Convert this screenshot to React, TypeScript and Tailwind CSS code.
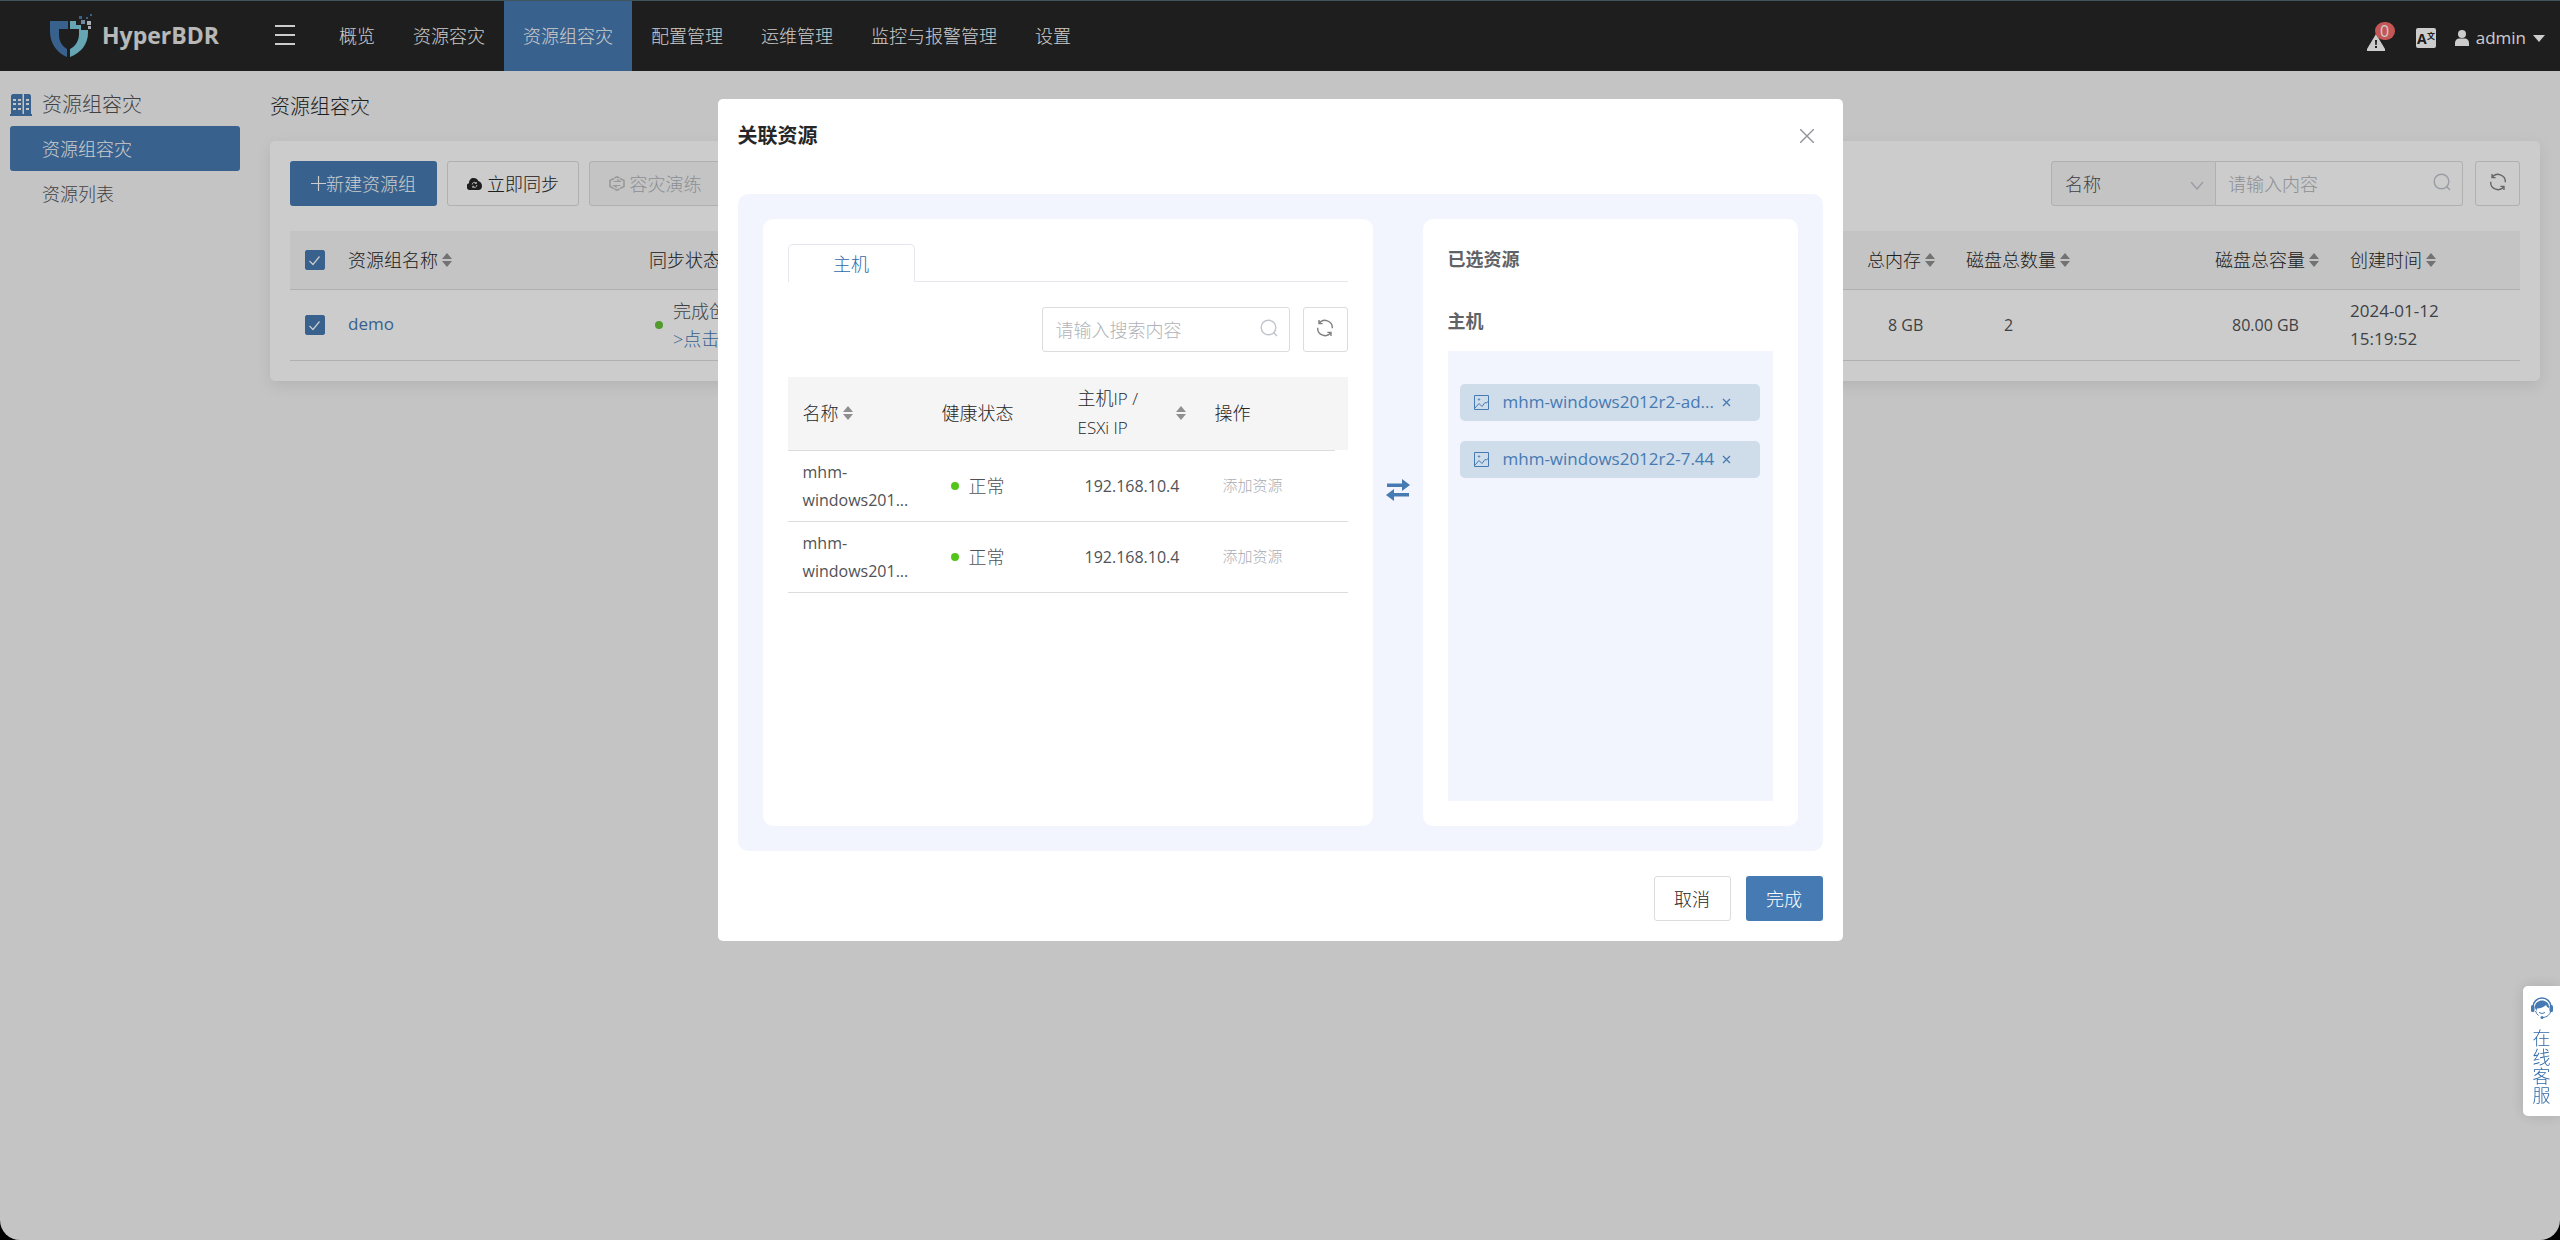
import { useState } from "react";
import clsx from "clsx";

const navItems = ["概览", "资源容灾", "资源组容灾", "配置管理", "运维管理", "监控与报警管理", "设置"];

const hosts = [
  { id: 1, name: "mhm-", rest: "windows201...", status: "正常", ip: "192.168.10.4" },
  { id: 2, name: "mhm-", rest: "windows201...", status: "正常", ip: "192.168.10.4" },
];

const Logo = () => (
  <svg width="44" height="44" viewBox="0 0 44 44" aria-hidden="true">
    <path d="M1 7H19V15H10V21C10 27 13 32 18 35V43C8 39 1 29 1 18Z" fill="#467ab2" />
    <path d="M21 7H27V11H32V16H39V19C39 30 32 39 21 43V35C27 32 30 26 30 20V15H21Z" fill="#7fcfe2" />
    <path d="M30 2h3v3h-3zM37 3h2v2h-2zM41 0h2v2h-2z" fill="#467ab2" />
    <path d="M32 6h4v4h-4z" fill="#8fa9c8" />
    <path d="M38 7h4v4h-4zM39 12h3v3h-3z" fill="#d5dbe0" />
  </svg>
);

const SortIcon = () => (
  <svg width="10" height="14" viewBox="0 0 10 14" className="shrink-0" aria-hidden="true">
    <path d="M5 0L10 6H0ZM5 14L0 8H10Z" fill="#8f8f8f" />
  </svg>
);

const SearchIcon = () => (
  <svg width="18" height="18" viewBox="0 0 18 18" fill="none" stroke="#c0c4cc" strokeWidth="1.4" aria-hidden="true">
    <circle cx="8.5" cy="8.5" r="7.3" />
    <path d="M13.5 13.5L17 17" />
  </svg>
);

const RefreshIcon = () => (
  <svg width="18" height="18" viewBox="0 0 18 18" fill="none" stroke="#808080" strokeWidth="1.4" aria-hidden="true">
    <path d="M3 1V4.6H6.6M3 4.6A7.3 7.3 0 0 1 16.3 9.2" />
    <path d="M15 17V13.4H11.4M15 13.4A7.3 7.3 0 0 1 1.7 8.8" />
  </svg>
);

const RefreshButton = () => (
  <button
    type="button"
    aria-label="刷新"
    className="flex size-[45px] items-center justify-center rounded-[3px] border border-[#dcdcdc] bg-white pb-1"
  >
    <RefreshIcon />
  </button>
);

const Th = ({ children, sortable, className }: { children?: React.ReactNode; sortable?: boolean; className?: string }) => (
  <th scope="col" className={clsx("border-b border-[#dcdcdc] px-[15px] text-left font-light", className)}>
    <span className="flex items-center gap-1">
      {children}
      {sortable && <SortIcon />}
    </span>
  </th>
);

const Checkbox = ({ label }: { label: string }) => (
  <span className="relative ml-[15px] block size-5">
    <input
      type="checkbox"
      defaultChecked
      aria-label={label}
      className="peer block size-5 appearance-none rounded-[2px] border border-[#467ab2] checked:bg-[#467ab2]"
    />
    <svg viewBox="0 0 20 20" className="pointer-events-none absolute inset-0 hidden peer-checked:block" aria-hidden="true">
      <path d="M4.500 11L8 14.500L14.500 6.500" fill="none" stroke="#fff" strokeWidth="1.2" />
    </svg>
  </span>
);

const Header = () => (
  <header className="flex h-[71px] items-center border-t border-[#4f6a72] bg-[#262626] text-white">
    <a href="#home" className="ml-[49px] flex w-[226px] items-center gap-[9px]">
      <Logo />
      <span className="text-[23px] font-bold text-[#e6e6e6]">HyperBDR</span>
    </a>
    <button type="button" aria-label="菜单" className="flex w-[45px] flex-col gap-[7px] pb-[2px]">
      <span className="h-[2px] w-5 bg-white" />
      <span className="h-[2px] w-5 bg-white" />
      <span className="h-[2px] w-5 bg-white" />
    </button>
    <nav className="flex h-full">
      {navItems.map((item) => (
        <a
          key={item}
          href="#nav"
          className={clsx("flex h-full items-center whitespace-nowrap px-[19px]", item === "资源组容灾" && "bg-[#467ab2]")}
        >
          {item}
        </a>
      ))}
    </nav>
    <div className="ml-auto mr-[15px] flex items-center pt-1">
      <button type="button" aria-label="报警" className="relative mr-[31px] pt-2">
        <svg width="18" height="17" viewBox="0 0 18 17" aria-hidden="true">
          <path d="M9 0L18 15V17H0V15Z" fill="#fff" />
          <path d="M8 6h2l-.3 5H8.300zM8 12h2v2H8z" fill="#262626" />
        </svg>
        <span className="absolute -top-1 left-2 flex h-[18px] w-5 items-center justify-center rounded-full bg-[#f56c6c] text-base font-normal">
          0
        </span>
      </button>
      <button type="button" aria-label="语言" className="mr-[19px]">
        <svg width="20" height="20" viewBox="0 0 20 20" aria-hidden="true">
          <rect width="20" height="20" rx="2" fill="#fff" />
          <text x="1" y="16" fontSize="14" fontWeight="700" fill="#262626">
            A
          </text>
          <text x="11" y="11" fontSize="8" fontWeight="700" fill="#262626">
            文
          </text>
        </svg>
      </button>
      <button type="button" className="flex items-center gap-[7px] text-[17px] font-normal">
        <svg width="14" height="16" viewBox="0 0 14 16" fill="#fff" aria-hidden="true">
          <circle cx="7" cy="4" r="4" />
          <path d="M0 16V13C0 10 2 8.500 4 8.500H10C12 8.500 14 10 14 13V16Z" />
        </svg>
        admin
        <svg width="12" height="7" viewBox="0 0 12 7" fill="#fff" aria-hidden="true">
          <path d="M0 0H12L6 7Z" />
        </svg>
      </button>
    </div>
  </header>
);

const Sidebar = () => (
  <aside className="w-[250px] shrink-0 px-[10px] pt-[13px] text-[#505256]">
    <div className="flex h-[42px] items-center gap-[10px] text-xl">
      <svg width="22" height="22" viewBox="0 0 22 22" aria-hidden="true">
        <path d="M1 1.500L2.500 0H12.500V20H14V0H19.500L21 1.500V20H22V22H0V20H1Z" fill="#467ab2" />
        <path d="M3 5h3v2H3zM8 5h3v2H8zM16 5h3v2h-3zM3 9h3v2H3zM8 9h3v2H8zM16 9h3v2h-3zM3 14h3v2H3zM8 14h3v2H8zM16 14h3v2h-3z" fill="#f5f5f5" />
      </svg>
      资源组容灾
    </div>
    <a href="#groups" className="flex h-[45px] items-center rounded-[3px] bg-[#467ab2] pl-8 text-white">
      资源组容灾
    </a>
    <a href="#list" className="flex h-[45px] items-center pl-8">
      资源列表
    </a>
  </aside>
);

const Toolbar = () => (
  <div className="flex items-center gap-[10px]">
    <button type="button" className="flex h-[45px] w-[147px] items-center justify-center rounded-[3px] bg-[#467ab2] text-white">
      <svg width="15" height="15" viewBox="0 0 15 15" stroke="#fff" strokeWidth="1.200" aria-hidden="true">
        <path d="M7.500 0V15M0 7.500H15" />
      </svg>
      新建资源组
    </button>
    <button
      type="button"
      className="flex h-[45px] w-[132px] items-center justify-center gap-[5px] rounded-[3px] border border-[#dcdcdc] text-[#262626]"
    >
      <svg width="15" height="12" viewBox="0 0 15 12" aria-hidden="true">
        <path d="M3.500 12A3.500 3.500 0 0 1 2 5.200C2 2 4 0 6.500 0C9 0 10.500 1.200 11.300 3C13.500 3.500 15 5.500 15 8C15 10.500 13.500 12 11.500 12Z" fill="#262626" />
        <path d="M5.200 6.500A2.300 2.300 0 0 1 9.300 5.200M9.800 7A2.300 2.300 0 0 1 5.700 8.600M9.300 4V5.500H7.800M5.700 9.800V8.300H7.200" fill="none" stroke="#fff" strokeWidth=".8" />
      </svg>
      立即同步
    </button>
    <button
      type="button"
      disabled
      className="flex h-[45px] w-[132px] items-center justify-center gap-[5px] rounded-[3px] border border-[#dcdcdc] bg-[#f5f5f5] text-[#b0b3b9]"
    >
      <svg width="16" height="15" viewBox="0 0 16 15" fill="none" stroke="#c0c0c0" strokeWidth="1.600" aria-hidden="true">
        <path d="M5 2.500L1 4.500V10.500L5 12.500M11 2.500L15 4.500V10.500L11 12.500M5.500 2L8 .8L10.500 2M5.500 13L8 14.200L10.500 13" />
        <path d="M4.500 5.500H11L8 3.500M11.500 9.500H5L8 11.500" strokeWidth="1.200" />
      </svg>
      容灾演练
    </button>
    <div className="ml-auto mr-[2px] flex">
      <div className="relative">
        <select
          aria-label="搜索字段"
          className="h-[45px] w-[165px] appearance-none rounded-l-[3px] border border-[#dcdcdc] bg-[#f5f5f5] px-[13px] text-[#505256]"
        >
          <option>名称</option>
        </select>
        <svg width="14" height="8" viewBox="0 0 14 8" fill="none" stroke="#c0c4cc" strokeWidth="1.4" className="pointer-events-none absolute right-3 top-[21px]" aria-hidden="true">
          <path d="M1 0L7 7L13 0" />
        </svg>
      </div>
      <div className="relative">
        <input
          type="text"
          aria-label="搜索内容"
          placeholder="请输入内容"
          className="h-[45px] w-[247px] rounded-r-[3px] border border-l-0 border-[#dcdcdc] bg-transparent pl-3 pr-10 placeholder:text-[#b0b3b9]"
        />
        <span className="pointer-events-none absolute right-3 top-3">
          <SearchIcon />
        </span>
      </div>
    </div>
    <RefreshButton />
  </div>
);

const GroupTable = () => (
  <table className="mt-[25px] w-full table-fixed border-collapse">
    <colgroup>
      <col className="w-[43px]" />
      <col className="w-[301px]" />
      <col />
      <col className="w-[99px]" />
      <col className="w-[249px]" />
      <col className="w-[135px]" />
      <col className="w-[185px]" />
    </colgroup>
    <thead>
      <tr className="h-[58px] bg-[#f5f5f5] text-[#262626]">
        <th scope="col" className="border-b border-[#dcdcdc]">
          <Checkbox label="全选" />
        </th>
        <Th sortable>资源组名称</Th>
        <Th>同步状态</Th>
        <Th sortable>总内存</Th>
        <Th sortable>磁盘总数量</Th>
        <Th sortable>磁盘总容量</Th>
        <Th sortable>创建时间</Th>
      </tr>
    </thead>
    <tbody>
      <tr className="h-[71px] border-b border-[#dcdcdc] text-[#505256]">
        <td>
          <Checkbox label="demo" />
        </td>
        <td className="px-[15px] text-[17px] font-normal">
          <a href="#demo" className="text-[#467ab2]">
            demo
          </a>
        </td>
        <td className="pl-[21px]">
          <div className="flex items-center gap-[10px] leading-7">
            <span className="size-2 rounded-full bg-[#67c23a]" />
            <div>
              <p>完成创建</p>
              <a href="#detail" className="block text-[#467ab2]">
                &gt;点击查看
              </a>
            </div>
          </div>
        </td>
        <td className="pl-9 text-base font-normal">8 GB</td>
        <td className="pl-[53px] text-base font-normal">2</td>
        <td className="pl-8 text-base font-normal">80.00 GB</td>
        <td className="pl-[15px] text-[17px] font-normal leading-7">
          2024-01-12
          <br />
          15:19:52
        </td>
      </tr>
    </tbody>
  </table>
);

const HostPanel = () => (
  <section className="flex-1 rounded-[10px] bg-white p-[25px]">
    <div role="tablist" className="flex border-b border-[#e4e7ed]">
      <button
        type="button"
        role="tab"
        aria-selected="true"
        className="-mb-px h-[38px] w-[127px] rounded-t-[5px] border border-b-0 border-[#e4e7ed] bg-white text-[#2f69a8]"
      >
        主机
      </button>
    </div>
    <div className="mt-[25px] flex justify-end gap-[13px]">
      <div className="relative">
        <input
          type="text"
          aria-label="搜索主机"
          placeholder="请输入搜索内容"
          className="h-[45px] w-[248px] rounded-[3px] border border-[#dcdcdc] pl-[13px] pr-10 placeholder:text-[#b0b3b9]"
        />
        <span className="pointer-events-none absolute right-3 top-3">
          <SearchIcon />
        </span>
      </div>
      <RefreshButton />
    </div>
    <table className="mt-[25px] w-full table-fixed border-collapse">
      <colgroup>
        <col className="w-[139px]" />
        <col className="w-[137px]" />
        <col className="w-[136px]" />
        <col />
        <col className="w-[13px]" />
      </colgroup>
      <thead>
        <tr className="h-[73px] bg-[#f5f5f5] text-[#262626]">
          <Th sortable>名称</Th>
          <Th>健康状态</Th>
          <th scope="col" className="border-b border-[#dcdcdc] px-[14px] text-left font-light leading-7">
            <span className="flex items-center justify-between">
              <span>
                主机<span className="text-[17px]">IP /</span>
                <br />
                <span className="text-[17px]">ESXi IP</span>
              </span>
              <SortIcon />
            </span>
          </th>
          <Th>操作</Th>
          <td />
        </tr>
      </thead>
      <tbody>
        {hosts.map((host) => (
          <tr key={host.id} className="h-[71px] border-b border-[#dcdcdc] text-[#505256]">
            <td className="pl-[15px] text-base font-normal leading-7">
              {host.name}
              <br />
              {host.rest}
            </td>
            <td className="pl-6">
              <span className="flex items-center gap-[10px]">
                <span className="size-2 rounded-full bg-[#52c41a]" />
                {host.status}
              </span>
            </td>
            <td className="pl-[21px] text-base font-normal">{host.ip}</td>
            <td colSpan={2} className="pl-[23px] pb-1">
              <button type="button" disabled className="text-[15px] text-[#a8abb2]">
                添加资源
              </button>
            </td>
          </tr>
        ))}
      </tbody>
    </table>
  </section>
);

const SelectedPanel = () => {
  const [selected, setSelected] = useState(["mhm-windows2012r2-ad...", "mhm-windows2012r2-7.44"]);

  return (
    <section className="flex w-[375px] flex-col rounded-[10px] bg-white p-[25px] font-bold text-[#606266]">
      <h3 className="leading-[30px]">已选资源</h3>
      <h4 className="mt-8 leading-[30px]">主机</h4>
      <ul className="mt-[15px] flex h-[450px] flex-col gap-5 bg-[#f2f5fd] px-3 pt-[33px] font-normal">
        {selected.map((name) => (
          <li key={name} className="mr-[1px] flex h-[37px] items-center rounded-[5px] bg-[#cfdcea] px-[14px] text-[17px] text-[#467ab2]">
            <svg width="15" height="15" viewBox="0 0 15 15" fill="none" stroke="#467ab2" aria-hidden="true">
              <path d="M.5.5H14.500V14.500H.5ZM1 13L5 8.500L8 11.500L11 7.500L12.500 8L14.500 6" />
              <circle cx="5" cy="4.500" r=".7" />
            </svg>
            <span className="ml-[14px]">{name}</span>
            <button type="button" aria-label="移除" className="ml-2" onClick={() => setSelected(selected.filter((n) => n !== name))}>
              <svg width="9" height="9" viewBox="0 0 9 9" stroke="#467ab2" strokeWidth="1.300" aria-hidden="true">
                <path d="M1 1L8 8M8 1L1 8" />
              </svg>
            </button>
          </li>
        ))}
      </ul>
    </section>
  );
};

const Dialog = () => (
  <div className="fixed inset-0 bg-black/20">
    <div role="dialog" aria-modal="true" aria-labelledby="dialog-title" className="mx-auto mt-[8vh] w-[1125px] rounded-[5px] bg-white p-5">
      <div className="flex h-[34px] items-center justify-between pr-[9px]">
        <h2 id="dialog-title" className="text-xl font-bold text-[#262626]">
          关联资源
        </h2>
        <button type="button" aria-label="关闭">
          <svg width="14" height="14" viewBox="0 0 14 14" stroke="#909399" strokeWidth="1.400" aria-hidden="true">
            <path d="M0 0L14 14M14 0L0 14" />
          </svg>
        </button>
      </div>
      <div className="mt-[41px] flex rounded-[10px] bg-[#f2f5fd] p-[25px]">
        <HostPanel />
        <div className="flex w-[50px] justify-center pt-[260px]">
          <svg width="24" height="22" viewBox="0 0 24 22" fill="#467ab2" aria-hidden="true">
            <path d="M1 4.500H16V0L24 6L16 12V8H1ZM23 14H8V10L0 16L8 22V17.500H23Z" />
          </svg>
        </div>
        <SelectedPanel />
      </div>
      <div className="mt-[25px] flex justify-end gap-[15px]">
        <button type="button" className="h-[45px] w-[77px] rounded-[3px] border border-[#dcdcdc] text-[#262626]">
          取消
        </button>
        <button type="button" className="h-[45px] w-[77px] rounded-[3px] bg-[#467ab2] text-white">
          完成
        </button>
      </div>
    </div>
  </div>
);

const SupportWidget = () => (
  <button
    type="button"
    className="fixed right-0 top-[986px] flex w-[37px] flex-col items-center rounded-l-[5px] bg-white py-[11px] text-[#2f69a8] shadow-[0_0_15px_rgba(0,0,0,0.12)]"
  >
    <svg width="22" height="22" viewBox="0 0 22 22" aria-hidden="true">
      <path d="M2 10A9 9 0 0 1 20 10" fill="none" stroke="#467ab2" strokeWidth="1.500" />
      <path d="M4 11C3 1 19 1 18 11C16.500 10.500 15.500 9.500 15 8C12 11 8 11.500 6 11.500L5.500 14Z" fill="#467ab2" />
      <rect y="8" width="3.500" height="7" rx="1.500" fill="#467ab2" />
      <rect x="18.500" y="8" width="3.500" height="7" rx="1.500" fill="#467ab2" />
      <path d="M8 15.500Q11 17.500 14 15.500M20 14Q18 20 12 20.500M4.500 14Q5.500 17 7.500 18.500" fill="none" stroke="#467ab2" />
      <circle cx="11" cy="20.500" r="1.500" fill="#467ab2" />
    </svg>
    <span className="mt-[10px] w-[18px] leading-[19px]">在线客服</span>
  </button>
);

const App = () => (
  <div className="min-h-screen bg-black font-['Open_Sans','Noto_Sans_CJK_SC',sans-serif] text-lg font-light">
    <div className="min-h-screen overflow-hidden rounded-b-[20px] bg-[#f5f5f5]">
      <Header />
      <div className="flex">
        <Sidebar />
        <main className="flex-1 px-5 pt-[21px]">
          <h1 className="text-xl leading-[30px] text-[#262626]">资源组容灾</h1>
          <div className="mt-[19px] rounded-[5px] bg-white p-5 shadow-[0_5px_15px_rgba(0,0,0,0.08)]">
            <Toolbar />
            <GroupTable />
          </div>
        </main>
      </div>
    </div>
    <Dialog />
    <SupportWidget />
  </div>
);

export default App;
